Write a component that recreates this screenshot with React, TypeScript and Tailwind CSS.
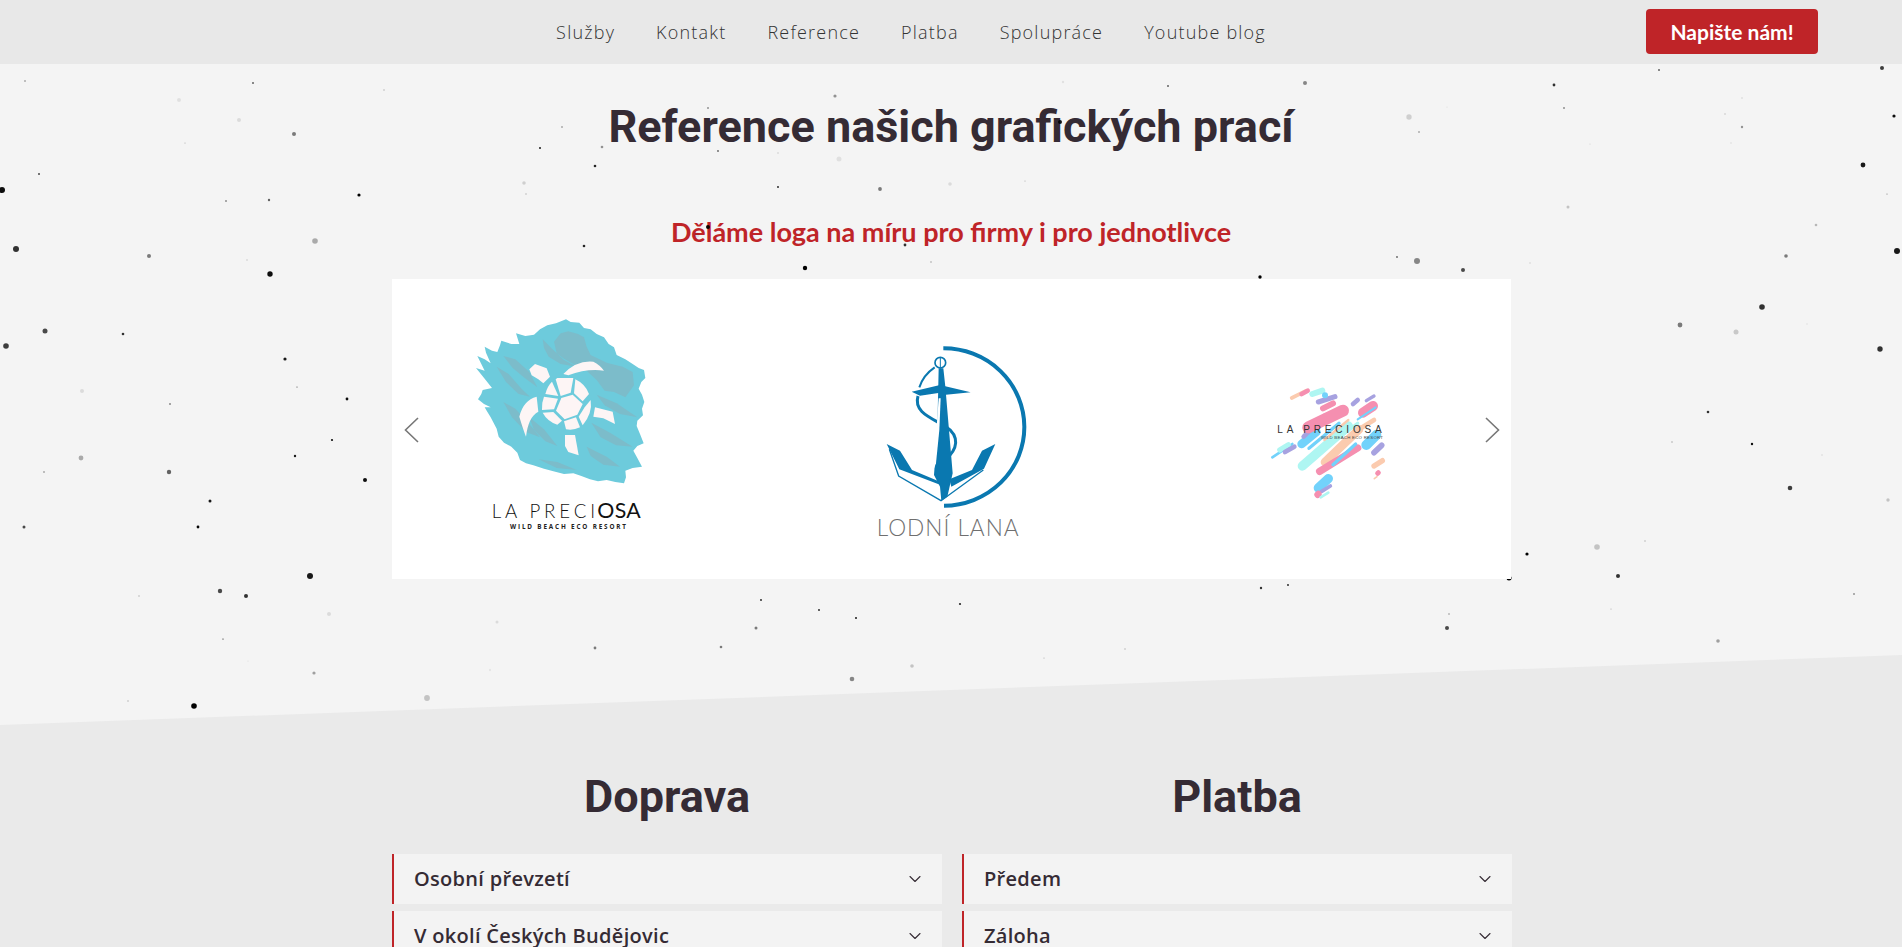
import React from 'react'
import { ChevronDown } from 'lucide-react'

const navLinks = ['Služby', 'Kontakt', 'Reference', 'Platba', 'Spolupráce', 'Youtube blog']

// x, y, r, opacity
const dots: number[][] = [
	[25, 81, 0.8, 0.5], [253, 83, 1, 0.6], [179, 100, 2, 0.08], [239, 120, 2, 0.1], [294, 134, 2, 0.5], [384, 90, 1, 0.15],
	[185, 143, 0.6, 0.3], [39, 174, 1, 0.7], [2, 190, 3, 0.95], [226, 201, 0.8, 0.7], [269, 200, 1.2, 0.6], [359, 195, 1.6, 1],
	[315, 241, 2.8, 0.3], [16, 249, 3, 0.8], [149, 256, 2, 0.5], [247, 260, 1, 0.1], [270, 274, 2.7, 0.95], [45, 331, 2.5, 0.7],
	[123, 334, 1.3, 0.8], [6, 346, 2.8, 0.75], [285, 359, 1.6, 0.9], [82, 391, 2, 0.1], [170, 404, 0.7, 0.9], [297, 387, 0.6, 0.7],
	[347, 399, 1.4, 0.95], [332, 440, 1.1, 0.95], [295, 456, 1.2, 0.9], [81, 458, 2.4, 0.3], [44, 472, 1, 0.3], [169, 472, 2.2, 0.6],
	[365, 480, 2, 0.95], [210, 501, 1.5, 0.9], [198, 527, 1.4, 0.98], [24, 527, 1.5, 0.7], [310, 576, 3, 0.9], [220, 591, 2.2, 0.7],
	[246, 596, 2, 0.8], [139, 596, 1, 0.15], [329, 614, 2, 0.1], [223, 639, 0.6, 0.95], [314, 673, 1.6, 0.35], [248, 661, 0.6, 0.1],
	[128, 701, 1, 0.15], [194, 706, 2.8, 1], [427, 698, 2.9, 0.2], [497, 622, 1.5, 0.1], [490, 670, 1.2, 0.06],
	[761, 600, 0.9, 0.9], [819, 610, 0.9, 0.9], [856, 618, 1, 0.9], [960, 604, 1.1, 0.85], [1261, 588, 1.2, 0.8], [1288, 585, 0.9, 0.9],
	[756, 628, 1.5, 0.5], [595, 648, 1.4, 0.5], [721, 647, 1.3, 0.5], [912, 666, 1.8, 0.2], [852, 679, 2.3, 0.45], [1044, 658, 0.6, 0.3], [1125, 649, 0.7, 0.3],
	[1659, 70, 1, 0.6], [1882, 68, 2, 0.75], [1554, 85, 1.4, 0.8], [1564, 108, 0.8, 0.7], [1447, 107, 0.6, 0.1], [1409, 117, 2.7, 0.15],
	[1419, 132, 0.7, 0.6], [1742, 98, 1, 0.08], [1725, 114, 0.8, 0.2], [1742, 127, 1.2, 0.4], [1894, 116, 1.6, 0.95], [1731, 143, 0.7, 0.12],
	[1590, 144, 0.6, 0.15], [1863, 165, 2.4, 0.9], [1887, 194, 0.6, 0.5], [1568, 207, 1.5, 0.2], [1816, 225, 1.3, 0.25], [1786, 256, 1.8, 0.5],
	[1897, 251, 3, 0.9], [1417, 261, 3, 0.45], [1463, 270, 2, 0.7], [1530, 263, 1, 0.08], [1762, 307, 2.8, 0.8], [1680, 325, 2.4, 0.5],
	[1736, 332, 2.5, 0.18], [1807, 324, 1, 0.05], [1880, 349, 2.7, 0.8],
	[1708, 412, 1.3, 0.8], [1672, 442, 0.8, 0.3], [1752, 444, 1.2, 0.95], [1822, 455, 1, 0.07], [1790, 488, 2.3, 0.75], [1888, 500, 1.7, 0.2],
	[1597, 547, 2.8, 0.2], [1645, 541, 0.8, 0.25], [1527, 554, 1.6, 1], [1618, 576, 2, 0.8], [1509, 578, 2.5, 1], [1854, 594, 0.7, 0.8],
	[1611, 609, 0.6, 0.3], [1449, 614, 0.7, 0.5], [1447, 628, 2, 0.7], [1718, 641, 1.8, 0.35],
	[1063, 82, 1.2, 0.08], [1168, 86, 1, 0.6], [1305, 83, 2, 0.45], [835, 96, 1.6, 0.4], [708, 108, 1, 0.4], [562, 127, 1, 0.3], [540, 148, 1, 0.9],
	[602, 147, 1.3, 0.4], [718, 151, 0.9, 0.6], [778, 153, 0.7, 0.2], [595, 166, 1.3, 0.85], [839, 159, 2.5, 0.08], [524, 183, 1.8, 0.15],
	[526, 194, 0.7, 0.3], [778, 187, 0.9, 0.9], [880, 189, 1.9, 0.5], [950, 184, 1.8, 0.1], [1025, 181, 0.6, 0.3], [708, 227, 2, 0.95],
	[905, 245, 1.4, 0.8], [584, 246, 1.3, 0.85], [805, 268, 2.2, 1], [931, 262, 0.7, 0.4], [1136, 242, 0.7, 0.3], [1397, 257, 0.9, 0.6],
	[1060, 122, 2, 0.9], [1169, 237, 1, 0.6], [697, 235, 2.5, 0.08], [1260, 277, 1.7, 1],
]

const TurtleLogo = () => (
	<svg width={240} height={240} viewBox="0 0 720 720">
		<path
			fill="#6dcbdc"
			d="M378 58 L392 66 L418 68 L432 84 L452 88 L470 102 L492 112 L506 132 L522 142 L530 165 L556 178 L578 192 L596 204 L612 210 L616 234 L604 246 L596 266 L606 284 L613 306 L606 326 L609 346 L592 362 L590 378 L600 402 L611 430 L592 438 L580 452 L592 474 L606 500 L578 504 L556 512 L558 532 L552 550 L526 546 L500 540 L474 544 L450 538 L424 528 L400 520 L372 522 L340 514 L312 506 L280 496 L258 490 L240 480 L232 458 L214 440 L192 428 L176 410 L170 386 L152 352 L140 332 L134 322 L152 322 L132 312 L114 298 L124 282 L128 270 L156 264 L134 236 L108 204 L134 212 L112 168 L134 178 L152 190 L138 158 L134 140 L156 152 L172 156 L180 136 L184 122 L214 132 L238 132 L228 100 L256 108 L282 104 L300 88 L322 76 L348 70 Z"
		/>
		<g fill="#7cbcca">
			<path d="M342 125 L362 100 L385 94 L414 102 L432 112 L440 140 L452 165 L500 188 L548 200 L578 216 L582 256 L556 292 L522 276 L494 272 L470 240 L440 212 L400 192 L372 176 L350 160 Z" />
			<path d="M308 118 L336 146 L372 180 L410 200 L362 192 L326 170 L312 144 Z" />
			<path d="M170 200 L206 222 L246 268 L270 290 L236 282 L198 246 Z" />
			<path d="M190 168 L226 178 L268 216 L292 262 L254 234 L218 204 Z" />
			<path d="M190 306 L226 326 L268 372 L300 412 L258 396 L216 352 Z" />
			<path d="M268 352 L312 388 L352 438 L316 424 L282 390 Z" />
			<path d="M454 368 L510 398 L578 440 L528 436 L482 412 Z" />
			<path d="M440 440 L500 470 L540 500 L490 494 L452 468 Z" />
			<path d="M296 478 L352 486 L410 510 L350 504 Z" />
			<path d="M470 284 L530 310 L592 352 L540 342 L494 316 Z" />
		</g>
		<circle cx="375" cy="311" r="80" fill="#6dcbdc" />
		<g fill="#fdf5f5">
			<path d="M364 294 L398 284 L428 312 L412 344 L374 358 L348 332 Z" />
			<path d="M347 238 L352 234 L400 234 L392 278 L362 288 Z" />
			<path d="M406 238 Q436 252 447 282 L428 304 L402 280 Z" />
			<path d="M336 245 L355 288 L316 282 Q322 258 336 245 Z" />
			<path d="M312 290 L354 296 L342 328 L306 330 Q304 310 312 290 Z" />
			<path d="M308 338 L340 336 L366 362 L352 374 Q322 364 308 338 Z" />
			<path d="M372 364 L408 352 L420 382 Q400 392 378 388 Z" />
			<path d="M416 350 L434 322 L452 300 Q458 340 428 376 Z" />
		</g>
		<path fill="#fdf5f5" d="M370 222 Q410 180 460 185 Q480 195 492 212 Q440 205 385 226 Z" />
		<path fill="#fdf5f5" d="M268 208 L285 192 L320 205 L330 230 L310 250 L295 238 L275 226 Z" />
		<path fill="#fdf5f5" d="M290 290 Q250 300 238 350 Q250 390 258 410 Q265 350 295 335 Z" />
		<path fill="#fdf5f5" d="M465 322 L518 335 L525 372 L490 355 L460 350 Z" />
		<path fill="#fdf5f5" d="M375 405 L405 405 L416 466 L385 456 L375 438 Z" />
		<text x="155" y="655" fontFamily="'Lato', sans-serif" fontWeight="300" fontSize="56" fill="#111" textLength="310">
			LA PRECI
		</text>
		<text x="472" y="655" fontFamily="'Lato', sans-serif" fontWeight="400" fontSize="64" fill="#111" textLength="130">
			OSA
		</text>
		<text x="210" y="688" fontFamily="'Open Sans', sans-serif" fontWeight="700" fontSize="19" fill="#222" textLength="348">
			WILD BEACH ECO RESORT
		</text>
	</svg>
)

const AnchorLogo = () => (
	<svg width={200} height={220} viewBox="0 0 600 660">
		<g fill="none" stroke="#0a78b0" strokeLinecap="butt">
			<path d="M250 55 A242 236 0 0 1 252 527" strokeWidth="12" />
			<path d="M224 112 Q190 135 178 172" strokeWidth="6" />
			<circle cx="241" cy="98" r="16" strokeWidth="5" />
			<path d="M241 82 L241 115" strokeWidth="3" />
			<path d="M174 198 C162 240 200 258 240 280 C295 305 298 345 268 378" strokeWidth="9" />
			<path d="M88 358 L116 438 L243 512 L370 420" strokeWidth="4" />
		</g>
		<path fill="#0a78b0" d="M236 115 L250 115 L256 170 L278 430 L262 500 L244 512 L240 470 L222 435 L232 300 Z" />
		<path fill="#fff" d="M236 205 L242 205 L238 300 L228 400 L221 418 Z" />
		<path fill="#0a78b0" d="M155 185 L240 165 L332 187 L258 194 L240 188 L180 197 Z" />
		<path fill="#0a78b0" d="M80 342 L120 362 L156 420 L240 455 L240 464 L118 418 Z" />
		<path fill="#0a78b0" d="M406 342 L366 362 L336 420 L268 448 L274 470 L372 416 Z" />
		<text x="50" y="617" fontFamily="'Lato', sans-serif" fontWeight="300" fontSize="68" fill="#6f6f6f" textLength="426">
			LODNÍ LANA
		</text>
	</svg>
)

// x1, y1, x2, y2, width, colour
const strokes: [number, number, number, number, number, string][] = [
	[128, 222, 172, 186, 26, '#72d2fb'],
	[134, 200, 196, 138, 14, '#a7a2e0'],
	[130, 288, 268, 168, 28, '#aef6f2'],
	[148, 172, 252, 122, 36, '#f58fb0'],
	[150, 235, 240, 160, 10, '#72d2fb'],
	[198, 276, 300, 178, 26, '#fbcbaf'],
	[182, 304, 296, 234, 22, '#f58fb0'],
	[222, 284, 290, 222, 10, '#72d2fb'],
	[250, 195, 296, 160, 10, '#aef6f2'],
	[196, 210, 268, 150, 7, '#fbcbaf'],
	[312, 128, 342, 108, 30, '#f58fb0'],
	[296, 148, 350, 112, 6, '#72d2fb'],
	[322, 92, 345, 78, 10, '#a7a2e0'],
	[282, 102, 296, 90, 14, '#a7a2e0'],
	[322, 225, 352, 195, 30, '#72d2fb'],
	[345, 248, 368, 226, 17, '#a7a2e0'],
	[300, 178, 345, 150, 14, '#fbcbaf'],
	[345, 288, 370, 272, 16, '#fbcbaf'],
	[356, 310, 358, 308, 15, '#f58fb0'],
	[346, 326, 354, 320, 5, '#fbcbaf'],
	[178, 354, 208, 326, 28, '#72d2fb'],
	[188, 364, 214, 348, 11, '#a7a2e0'],
	[176, 374, 178, 372, 20, '#f58fb0'],
	[185, 382, 208, 368, 8, '#aef6f2'],
	[40, 262, 100, 222, 8, '#72d2fb'],
	[62, 240, 88, 224, 15, '#aef6f2'],
	[78, 246, 106, 230, 14, '#a7a2e0'],
	[98, 84, 142, 62, 11, '#fbcbaf'],
	[128, 72, 146, 62, 14, '#f58fb0'],
	[160, 72, 190, 62, 18, '#aef6f2'],
	[178, 96, 228, 80, 15, '#a7a2e0'],
	[192, 115, 222, 100, 18, '#f58fb0'],
	[198, 76, 198, 76, 18, '#72d2fb'],
]

const RainbowTurtleLogo = () => (
	<svg width={140} height={140} viewBox="0 0 420 420">
		<g fill="none" strokeLinecap="round">
			{strokes.map((s, i) => (
				<line key={i} x1={s[0]} y1={s[1]} x2={s[2]} y2={s[3]} strokeWidth={s[4]} stroke={s[5]} />
			))}
		</g>
		<text x="55" y="190" fontFamily="'Liberation Sans', sans-serif" fontSize="30" fill="#333" textLength="313">
			LA PRECIOSA
		</text>
		<text x="186" y="206" fontFamily="'Liberation Sans', sans-serif" fontSize="13" fill="#444" textLength="186">
			WILD BEACH ECO RESORT
		</text>
	</svg>
)

const AccordionRow = ({ title }: { title: string }) => (
	<div className="flex h-[50px] items-center justify-between border-l-2 border-[#bf2428] bg-[#f3f3f3] pr-[17px] pl-[20px]">
		<span className="font-['Open_Sans',sans-serif] text-[20px] font-semibold tracking-[0.3px] text-[#352b34]">{title}</span>
		<ChevronDown size={20} strokeWidth={1.3} className="text-[#352b34]" />
	</div>
)

const Column = ({ title, rows }: { title: string; rows: string[] }) => (
	<div className="w-[550px]">
		<h2 className="mb-[30px] text-center font-['Roboto',sans-serif] text-[45px] leading-[54px] font-bold text-[#352b34]">{title}</h2>
		<div className="flex flex-col gap-[7px]">
			{rows.map((r) => (
				<AccordionRow key={r} title={r} />
			))}
		</div>
	</div>
)

export default function App() {
	return (
		<div className="h-[947px] overflow-hidden bg-[#eaeaea]">
			<nav className="relative flex h-[64px] items-center justify-center bg-[#e8e8e8] pr-[80px]">
				<ul className="flex gap-[41px] font-['Open_Sans',sans-serif] text-[18px] font-light tracking-[1.2px] text-[#333]">
					{navLinks.map((l) => (
						<li key={l}>{l}</li>
					))}
				</ul>
				<button className="absolute top-[9px] left-[1646px] h-[45px] w-[172px] rounded-[4px] bg-[#bf2428] font-['Lato',sans-serif] text-[21px] font-bold text-white">
					Napište nám!
				</button>
			</nav>

			<section className="relative h-[661px] bg-[#f4f4f4] pt-[36px]">
				<h1 className="text-center font-['Roboto',sans-serif] text-[45px] leading-[54px] font-bold text-[#352b34]">
					Reference našich grafických prací
				</h1>
				<p className="mt-[62px] text-center font-['Lato',sans-serif] text-[27px] leading-[32px] font-bold text-[#bf2428]">
					Děláme loga na míru pro firmy i pro jednotlivce
				</p>

				<svg className="pointer-events-none absolute inset-0" width={1902} height={661} viewBox="0 64 1902 661">
					<polygon points="0,725 1902,655 1902,725" fill="#eaeaea" />
					{dots.map((d, i) => (
						<circle key={i} cx={d[0]} cy={d[1]} r={d[2]} fill="#000" opacity={d[3]} />
					))}
				</svg>

				<div className="relative z-10 mt-[31px] ml-[392px] grid h-[300px] w-[1119px] grid-cols-3 bg-white">
					<div className="pt-[21px] pl-[48px]">
						<TurtleLogo />
					</div>
					<div className="pt-[51px] pl-[95px]">
						<AnchorLogo />
					</div>
					<div className="pt-[91px] pl-[121px]">
						<RainbowTurtleLogo />
					</div>
					<svg className="absolute top-[138px] left-[12px]" width={15} height={26} viewBox="0 0 15 26" fill="none" stroke="#777" strokeWidth="1.6">
						<path d="M14 1 L1.5 13 L14 25" />
					</svg>
					<svg className="absolute top-[138px] right-[11px]" width={15} height={26} viewBox="0 0 15 26" fill="none" stroke="#777" strokeWidth="1.6">
						<path d="M1 1 L13.5 13 L1 25" />
					</svg>
				</div>
			</section>

			<section className="ml-[392px] flex w-[1120px] justify-between pt-[45px]">
				<Column title="Doprava" rows={['Osobní převzetí', 'V okolí Českých Budějovic']} />
				<Column title="Platba" rows={['Předem', 'Záloha']} />
			</section>
		</div>
	)
}
